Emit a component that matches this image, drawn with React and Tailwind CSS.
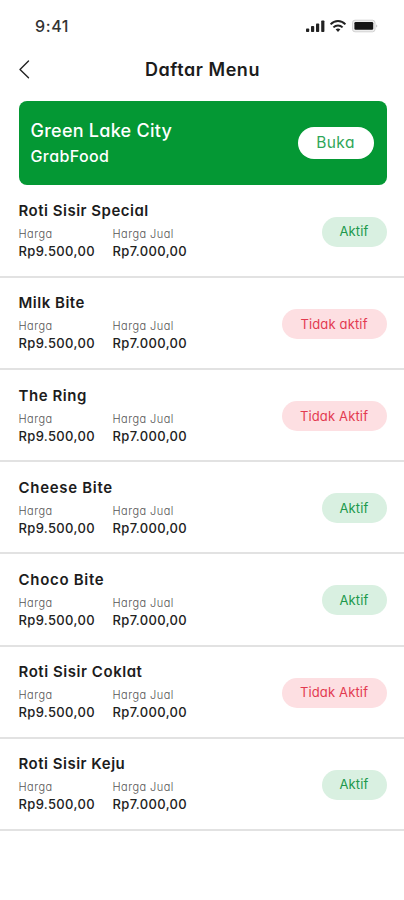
const menuItems = [
  { name: "Roti Sisir Special", status: "Aktif", active: true, tracking: "tracking-[0.5px]" },
  { name: "Milk Bite", status: "Tidak aktif", active: false, tracking: "tracking-[0.5px]" },
  { name: "The Ring", status: "Tidak Aktif", active: false, tracking: "tracking-[0.55px]" },
  { name: "Cheese Bite", status: "Aktif", active: true, tracking: "tracking-[0.7px]" },
  { name: "Choco Bite", status: "Aktif", active: true, tracking: "tracking-[0.7px]" },
  { name: "Roti Sisir Coklat", status: "Tidak Aktif", active: false, tracking: "tracking-[0.55px]" },
  { name: "Roti Sisir Keju", status: "Aktif", active: true, tracking: "tracking-[0.5px]" },
];

function StatusBar() {
  return (
    <div className="flex h-[52px] items-center justify-between pl-[35px] pr-[25px]">
      <span className="text-[16px] font-medium leading-5 tracking-[0.6px] text-[#333]">9:41</span>
      <svg width="73" height="14" viewBox="0 0 73 14">
        {/* signal */}
        <g fill="#222">
          <rect x="0" y="9.5" width="3.2" height="3.5" rx="0.8" />
          <rect x="5" y="7" width="3.2" height="6" rx="0.8" />
          <rect x="10" y="4.5" width="3.2" height="8.5" rx="0.8" />
          <rect x="15.2" y="1.5" width="3.2" height="11.5" rx="0.8" />
        </g>
        {/* wifi */}
        <g fill="none" stroke="#222" strokeWidth="2">
          <path d="M24.6 5.4 C28.8 1 35.2 1 39.4 5.4" />
          <path d="M27.4 8.4 C30 5.9 34 5.9 36.6 8.4" />
        </g>
        <path d="M29.6 10.3 Q32 8.6 34.4 10.3 L32 13 Z" fill="#222" />
        {/* battery */}
        <rect x="46.5" y="1.2" width="22.5" height="11.6" rx="2.5" fill="#eee" stroke="#d2d2d2" />
        <rect x="48.4" y="3" width="18.8" height="7.8" rx="1.2" fill="#151515" />
        <path d="M70.4 5.2 Q72.2 7 70.4 8.8 Z" fill="#aaa" />
      </svg>
    </div>
  );
}

function Header() {
  return (
    <div className="grid h-[34px] grid-cols-[40px_1fr_40px] items-center">
      <button className="pl-[18px]" aria-label="Kembali">
        <svg width="12" height="20" viewBox="0 0 12 20" fill="none" stroke="#222" strokeWidth="1.4" strokeLinecap="round" strokeLinejoin="round">
          <path d="M10.5 2 L2 10.5 L10.5 18.8" />
        </svg>
      </button>
      <h1 className="pt-[2px] pl-[1px] text-center text-[18px] font-semibold leading-6 tracking-[0.55px] text-[#1c1c1c]">
        Daftar Menu
      </h1>
    </div>
  );
}

function StoreCard() {
  return (
    <div className="ml-[18.5px] mr-[17.5px] mt-[15px] flex h-[84px] items-center justify-between rounded-[8px] bg-[#049834] pl-[12px] pr-[13px] text-white">
      <div>
        <p className="text-[18px] font-medium leading-[26px] tracking-[0.25px]">Green Lake City</p>
        <p className="text-[16px] font-medium leading-[25px] tracking-[0.4px]">GrabFood</p>
      </div>
      <span className="flex h-[32px] w-[76px] items-center justify-center rounded-full bg-white text-[15.5px] tracking-[0.4px] text-[#2fa658]">
        Buka
      </span>
    </div>
  );
}

function Price({ label, value }) {
  return (
    <div className="w-[94px] pt-[3px]">
      <p className="text-[11px] font-light leading-[17px] tracking-[0.45px] text-[#555]">{label}</p>
      <p className="text-[13px] font-medium leading-[16px] tracking-[0.35px] text-[#222]">{value}</p>
    </div>
  );
}

function MenuRow({ item }) {
  return (
    <div className="flex h-[92.2px] items-start justify-between border-b-2 border-[#e2e2e2] pl-[18.5px] pr-[17.5px]">
      <div className="pt-[13.6px]">
        <h2 className={`text-[15px] font-semibold leading-[24px] text-[#1c1c1c] ${item.tracking}`}>
          {item.name}
        </h2>
        <div className="flex">
          <Price label="Harga" value="Rp9.500,00" />
          <Price label="Harga Jual" value="Rp7.000,00" />
        </div>
      </div>
      <span
        className={`mt-[31px] flex h-[30px] items-center justify-center rounded-full pt-[1px] text-[13px] tracking-[0.15px] ${
          item.active ? "w-[65px] bg-[#d9f0e1] text-[#20994b]" : "w-[105px] bg-[#fddfe2] text-[#e33a50]"
        }`}
      >
        {item.status}
      </span>
    </div>
  );
}

export default function App() {
  return (
    <div className="h-[900px] w-full overflow-hidden bg-white font-['Inter',sans-serif] [font-feature-settings:'cv11']">
      <StatusBar />
      <Header />
      <StoreCard />
      <div className="pt-[0.6px]">
        {menuItems.map((item) => (
          <MenuRow key={item.name} item={item} />
        ))}
      </div>
    </div>
  );
}
